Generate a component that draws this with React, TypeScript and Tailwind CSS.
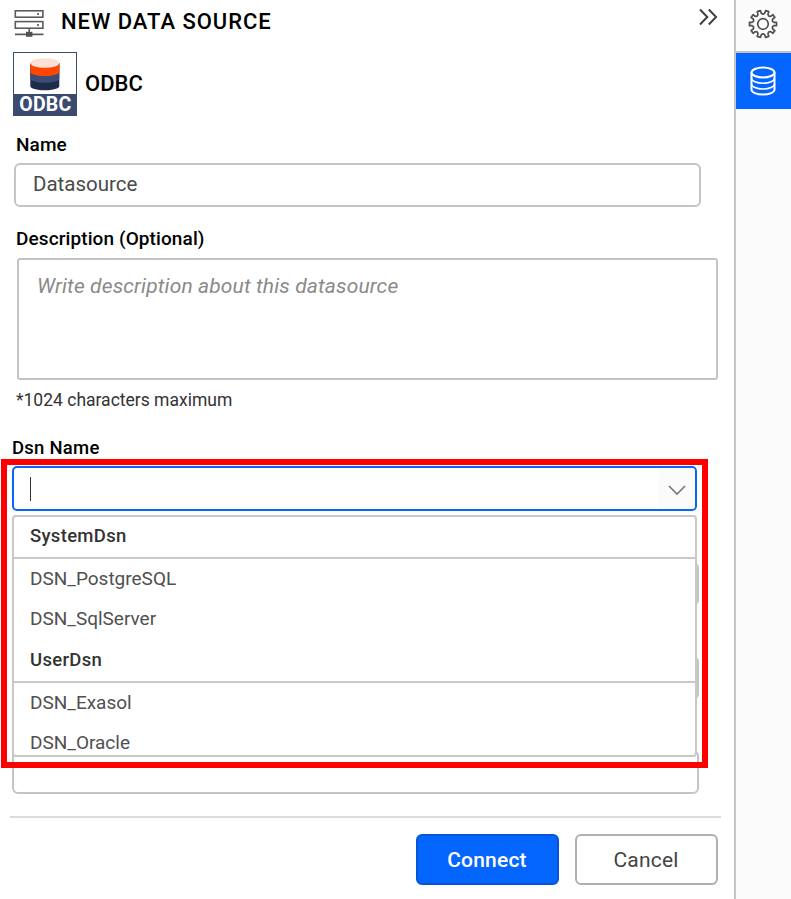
import React from "react";

const systemDsn = ["DSN_PostgreSQL", "DSN_SqlServer"];
const userDsn = ["DSN_Exasol", "DSN_Oracle"];

function ServerIcon() {
  return (
    <svg className="ml-[14px] mt-[9px] h-[28px] w-[31px]" viewBox="0 0 31 28" fill="none" stroke="#5c5c5c" strokeWidth="1.6">
      <rect x="1.3" y="1.8" width="27.6" height="6.4" />
      <rect x="1.3" y="12.6" width="27.6" height="6.6" />
      <path d="M15.2 19.3v4M1 25.4h28.5" />
      <path d="M12 22.800h6.400v5H12z" fill="#505050" stroke="none" />
      <path d="M23 5h2M23 16h2" strokeWidth="2" stroke="#6a7686" />
    </svg>
  );
}

function OdbcLogo() {
  return (
    <div className="flex h-[64px] w-[64px] flex-col border-[1.5px] border-[#3b4b70] bg-white">
      <svg className="h-[41px] w-full shrink-0" viewBox="0 0 62 41">
        <path d="M16.300 10v23c0 2.500 6.400 4.300 14.500 4.300s14.500-1.800 14.500-4.300V10z" fill="#1f2c49" />
        <path d="M16.300 10v15.500c0 2.500 6.400 4.300 14.500 4.300s14.500-1.800 14.500-4.300V10z" fill="#3b4d74" />
        <path d="M16.300 10v8.700c0 2.500 6.400 4.300 14.500 4.300s14.500-1.800 14.500-4.300V10z" fill="#ff4500" />
        <ellipse cx="30.800" cy="10" rx="14.500" ry="4.800" fill="#fce0d6" />
      </svg>
      <div className="flex flex-1 items-center justify-center bg-[#3b4b70] text-[19.5px] leading-none font-bold tracking-[0.2px] text-white">
        <span>ODBC</span>
      </div>
    </div>
  );
}

// Outline of a ten-toothed cog with rounded valleys, centred on (15, 15).
function gearPath() {
  const at = (deg: number, r: number) => {
    const t = ((deg - 90) * Math.PI) / 180;
    return (15 + r * Math.cos(t)).toFixed(2) + " " + (15 + r * Math.sin(t)).toFixed(2);
  };
  let d = "";
  for (let i = 0; i < 10; i++) {
    const a = i * 36 + 18;
    d += (i === 0 ? "M" : "L") + at(a - 7, 13.6) + "L" + at(a + 7, 13.6) + "L" + at(a + 9, 11);
    d += "Q" + at(a + 18, 9) + " " + at(a + 27, 11);
  }
  return d + "Z";
}

function Group({ title, items }: { title: string; items: string[] }) {
  return (
    <>
      <div className="flex h-[42px] items-center border-b-2 border-[#c8c8c8] pl-4 text-[18.5px] font-medium tracking-[0.3px] text-[#333]">{title}</div>
      <div className="h-[82px]">
        {items.map((item) => (
          <div key={item} className="flex h-[40px] items-center pl-4 text-[19px] text-[#505050]">{item}</div>
        ))}
      </div>
    </>
  );
}

export default function App() {
  return (
    <div className="flex h-[899px] w-[791px] overflow-hidden bg-white font-['Roboto',sans-serif] text-black">
      <main className="flex w-[734px] shrink-0 flex-col">
        <header className="flex h-[52px] items-start">
          <ServerIcon />
          <h1 className="mt-[7px] ml-4 text-[22px] leading-[30px] font-medium tracking-[0.97px] whitespace-nowrap">NEW DATA SOURCE</h1>
          <svg className="mt-[8px] mr-[14px] ml-auto h-[18px] w-[22px]" viewBox="0 0 22 18" fill="none" stroke="#404040" strokeWidth="2">
            <path d="M2 1.500L9.300 9L2 16.500M10.800 1.500L18.100 9L10.800 16.500" />
          </svg>
        </header>
        <div className="flex h-[64px] items-center pl-[13.400px]">
          <OdbcLogo />
          <span className="mb-[2px] ml-[7.500px] text-[22px] font-medium tracking-[0.1px]">ODBC</span>
        </div>
        <label className="mt-[17px] ml-4 h-[24px] text-[19px] leading-[24px] font-medium tracking-[0.1px]">Name</label>
        <div className="mt-[6px] ml-[14px] flex h-[44px] w-[687px] items-center rounded-md border-2 border-[#c4c4c4] pb-px pl-[17px] text-[20.500px] text-[#4a4a4a]">Datasource</div>
        <label className="mt-[20px] ml-4 h-[24px] text-[19px] leading-[24px] font-medium tracking-[0.1px]">Description (Optional)</label>
        <div className="mt-[7px] ml-[17px] h-[122px] w-[701px] rounded-[3px] border-2 border-[#c4c4c4] pt-[13px] pl-[18px] text-[21px] leading-[26px] tracking-[0.13px] text-[#8a8a8a] italic">Write description about this datasource</div>
        <p className="mt-[8px] ml-4 h-[24px] text-[17.500px] leading-[24px] text-[#333]">*1024 characters maximum</p>
        <label className="mt-[24px] ml-[12px] h-[24px] text-[18.500px] leading-[24px] font-medium tracking-[0.25px]">Dsn Name</label>

        <section className="relative mt-[6px] h-[350px] shrink-0">
          <div className="ml-[12px] flex h-[45px] w-[685px] items-center rounded-[5px] border-2 border-[#0565ff]">
            <span className="ml-[16px] h-[24px] w-px bg-[#333]" />
            <div className="ml-auto flex h-full w-[37px] items-center justify-center rounded-r bg-[#fbfbfb]">
              <svg className="mt-[3px] h-[12px] w-[20px]" viewBox="0 0 20 12" fill="none" stroke="#777" strokeWidth="1.600">
                <path d="M2 2L10 10L18 2" />
              </svg>
            </div>
          </div>
          <div className="mt-[51px] ml-[12px] flex w-[687px] flex-col gap-[50px]">
            <div className="h-[44px] rounded-md border-2 border-[#c4c4c4]" />
            <div className="h-[44px] rounded-md border-2 border-[#c4c4c4]" />
            <div className="h-[44px] rounded-md border-2 border-[#c4c4c4]" />
          </div>
          <div className="absolute top-[49px] left-[12px] h-[242px] w-[685px] overflow-hidden rounded border-2 border-[#c8c8c8] bg-white">
            <Group title="SystemDsn" items={systemDsn} />
            <Group title="UserDsn" items={userDsn} />
          </div>
          <div className="absolute top-[-7px] left-px h-[309px] w-[707px] border-[6px] border-[#ff0000]" />
        </section>

        <footer className="ml-[10px] flex w-[711px] justify-end gap-[16px] border-t-2 border-[#dcdcdc] pt-[16px] pr-[3px]">
          <button className="h-[51px] w-[143px] rounded-md border-2 border-[#0555da] bg-[#0565ff] pt-[2px] pr-px text-[21px] font-medium tracking-[0.2px] text-white">Connect</button>
          <button className="h-[51px] w-[143px] rounded-md border-2 border-[#b0b0b0] bg-white pt-[2px] pr-px text-[21px] tracking-[0.2px] text-[#444]">Cancel</button>
        </footer>
      </main>
      <aside className="w-[57px] shrink-0 border-l-2 border-[#c4c4c4] bg-[#fbfbfb]">
        <div className="flex h-[53px] items-center justify-center border-b-2 border-[#c4c4c4] pr-px pb-[3px]">
          <svg className="h-[30px] w-[30px]" viewBox="0 0 30 30" fill="none" stroke="#505050" strokeWidth="1.700" strokeLinejoin="round">
            <path d={gearPath()} />
            <circle cx="15" cy="15" r="5.300" />
          </svg>
        </div>
        <div className="flex h-[56px] items-center justify-center bg-[#0565ff] pr-px">
          <svg className="h-[30px] w-[28px]" viewBox="0 0 28 30" fill="none" stroke="white" strokeWidth="2">
            <ellipse cx="14" cy="6.500" rx="11.500" ry="5" />
            <path d="M2.500 6.500v17c0 2.800 5.100 5 11.500 5s11.500-2.200 11.500-5v-17" />
            <path strokeWidth="1.500" d="M2.500 12.200c0 2.800 5.100 5 11.500 5s11.500-2.200 11.500-5M2.500 17.900c0 2.800 5.100 5 11.500 5s11.500-2.200 11.500-5" />
          </svg>
        </div>
      </aside>
    </div>
  );
}
